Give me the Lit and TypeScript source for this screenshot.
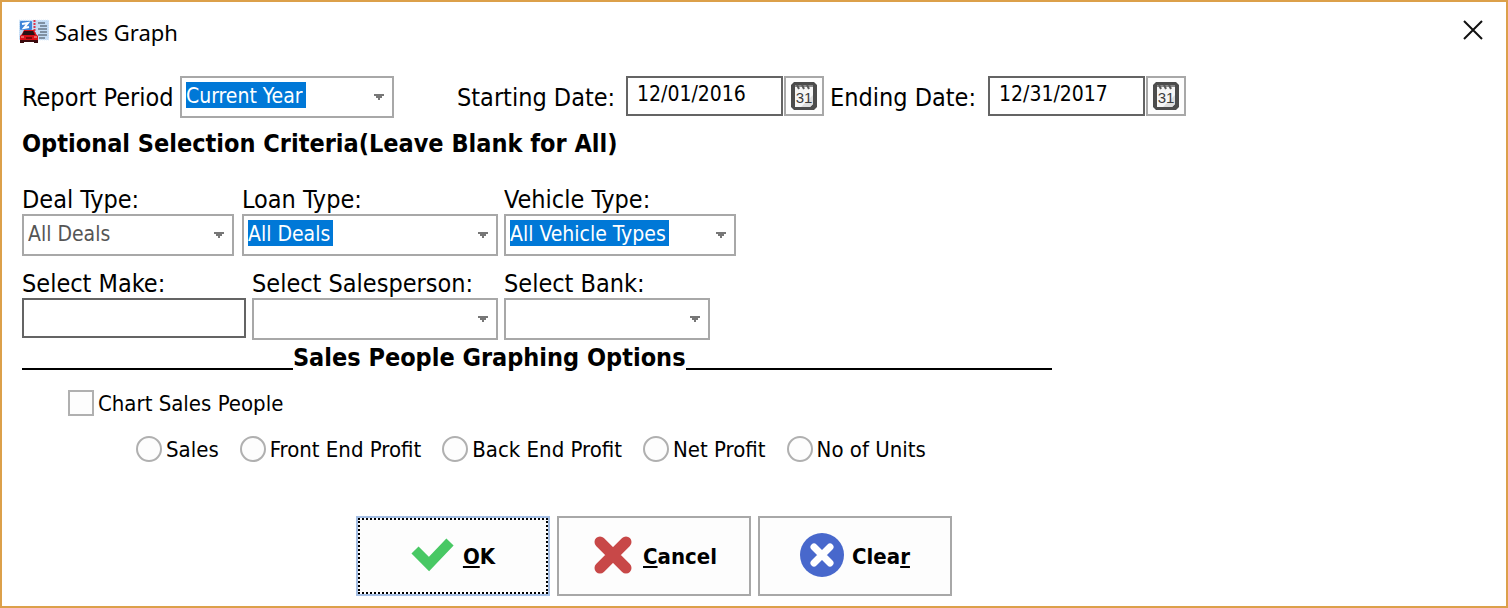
import { LitElement, html, css, svg } from "lit";
import { customElement, property } from "lit/decorators.js";
import { classMap } from "lit/directives/class-map.js";

const calendarIcon = html`<svg width="26" height="28" viewBox="0 0 26 28" aria-hidden="true">
  <path d="M3 0h20l3 3v22l-3 3H3l-3-3V3z" fill="#4c4c4c" />
  <path d="M4 3h18v19l-3 3H4z" fill="#f6f6f6" />
  <path d="M22 13v9l-3 3H10z" fill="#dedede" />
  <path d="M4 3h18v2H4z" fill="#8a8a8a" />
  <path d="M6 3l2 4M11 3l2 4M16 3l2 4" stroke="#5a5a5a" stroke-width="2" fill="none" />
  <text x="13" y="21" text-anchor="middle" font-family="Liberation Sans, sans-serif" font-size="15" fill="#3c3c3c">31</text>
</svg>`;

const appIcon = html`<svg width="30" height="26" viewBox="0 0 30 26" aria-hidden="true">
  <rect x="0" y="1" width="30" height="20" fill="#c3dcf5" />
  <path d="M0 1h30v20H0z" fill="none" stroke="#e2effb" stroke-dasharray="1 1" />
  <rect x="1" y="2" width="12" height="9" rx="1" fill="#3f85d8" />
  <path d="M3 5l6-1-4 5 5-1" stroke="#fff" stroke-width="2" fill="none" />
  <path d="M15.500 1v20" stroke="#e0344a" stroke-width="2" stroke-dasharray="2 1" />
  <path d="M19 4h7M21 7h7M19 10h9M21 13h7M19 16h9M20 19h6" stroke="#3d4650" stroke-width="1" />
  <path d="M5 11h10l2 4 2 2v5H1v-5l2-2z" fill="#d80f18" />
  <path d="M5 12h9l2 4H3z" fill="#2a1216" />
  <path d="M7 18h6v2H7z" fill="#7c070d" />
  <path d="M2 18h3M15 18h3" stroke="#ffb0a8" stroke-width="1" />
  <path d="M1 21h18v3h-4v-1H5v1H1z" fill="#3a0a0d" />
</svg>`;

const okIcon = svg`<path d="M4 17L18 31L39 9" fill="none" stroke="#48c864" stroke-width="10" stroke-linejoin="miter" />`;
const cancelIcon = svg`<path d="M9 9l26 26M35 9L9 35" fill="none" stroke="#c84848" stroke-width="11" stroke-linecap="round" />`;
const clearIcon = svg`<circle cx="22" cy="22" r="22" fill="#4868cc" /><path d="M14 14l16 16M30 14L14 30" fill="none" stroke="#fff" stroke-width="7" stroke-linecap="round" />`;

@customElement("combo-field")
class ComboField extends LitElement {
  @property() label = "";
  @property() layout = "stacked";
  @property({ type: Boolean }) highlighted = false;
  @property({ attribute: false }) options: string[] = [];

  static styles = css`
    :host { display: block; }
    .field { display: flex; flex-direction: column; }
    .inline { flex-direction: row; align-items: center; }
    .label { padding-top: 2px; line-height: 28px; white-space: nowrap; }
    .inline .label { width: 158px; }
    .box {
      display: flex; align-items: flex-start; justify-content: space-between;
      box-sizing: border-box; flex: 1; height: 42px;
      padding: 4px 8px 4px 4px; border: 2px solid #a8a8a8; background: #fff;
    }
    .stacked .box { flex: none; }
    .select {
      appearance: none; field-sizing: content; box-sizing: border-box;
      height: 26px; min-width: 100px; margin: 0; padding: 2px 3px 0 0; border: 0; border-radius: 0; outline: 0;
      background: transparent; color: #555;
      font: 21px/24px "DejaVu Sans Condensed", Tahoma, sans-serif;
    }
    .highlighted .select { background: #0078d7; color: #fff; min-width: 0; }
    .arrow { align-self: center; flex: none; }
  `;

  render() {
    return html`<div class=${classMap({ field: true, inline: this.layout === "inline", stacked: this.layout !== "inline", highlighted: this.highlighted })}>
      <label class="label" for="select">${this.label}</label>
      <div class="box">
        <select class="select" id="select">${this.options.map((o) => html`<option>${o}</option>`)}</select>
        <svg class="arrow" width="10" height="6" viewBox="0 0 10 6" aria-hidden="true"><path d="M0 0h10v2H8v2H6v2H4V4H2V2H0z" fill="#777" /></svg>
      </div>
    </div>`;
  }
}

@customElement("date-field")
class DateField extends LitElement {
  @property() label = "";
  @property() value = "";

  static styles = css`
    :host { display: flex; align-items: flex-start; }
    .label { flex: 1; padding-top: 2px; line-height: 40px; white-space: nowrap; }
    .input {
      box-sizing: border-box; width: 157px; height: 40px; margin: 0; padding: 0 9px 4px;
      border: 2px solid #646464; border-radius: 0; background: #fff; color: #000; outline: 0;
      font: 21px "DejaVu Sans Condensed", Tahoma, sans-serif;
    }
    .pick {
      display: grid; place-items: center; box-sizing: border-box; width: 40px; height: 40px;
      margin: 0 0 0 1px; padding: 0; border: 2px solid #a8a8a8; background: #fdfdfd;
    }
  `;

  render() {
    return html`<label class="label" for="date">${this.label}</label>
      <input class="input" id="date" type="text" .value=${this.value} />
      <button class="pick" type="button" aria-label="Pick date">${calendarIcon}</button>`;
  }
}

@customElement("app-root")
class AppRoot extends LitElement {
  static styles = css`
    :host { display: block; color: #000; font: 25px "DejaVu Sans Condensed", Tahoma, sans-serif; }
    .dialog { box-sizing: border-box; min-height: 100vh; border: 2px solid #dca04a; background: #fff; }
    .titlebar { display: flex; align-items: center; height: 60px; padding: 0 23px 0 17px; }
    .title { flex: 1; margin: 0 0 0 6px; font: 22px/30px "Noto Sans", "Segoe UI", sans-serif; }
    .close { display: grid; width: 20px; height: 20px; margin: 0 0 4px; padding: 0; border: 0; background: none; }
    .form { padding: 14px 20px 10px; }
    .row { display: flex; align-items: flex-start; }
    .period { width: 372px; margin-right: 63px; }
    .start { width: 367px; margin-right: 6px; }
    .end { width: 356px; }
    .heading { margin: 0; padding-top: 2px; font-size: 25px; font-weight: bold; line-height: 28px; white-space: nowrap; }
    .criteria { margin: 10px 0 26px; }
    .types { gap: 8px; margin-bottom: 12px; }
    .picks { gap: 6px; }
    .deal { width: 212px; }
    .loan { width: 256px; }
    .vehicle { width: 232px; margin-left: -2px; }
    .make { width: 224px; }
    .person { width: 246px; }
    .bank { width: 206px; }
    .label { display: block; padding-top: 2px; line-height: 28px; white-space: nowrap; }
    .input {
      display: block; box-sizing: border-box; width: 100%; height: 40px; margin: 0; padding: 0 9px 4px;
      border: 2px solid #646464; border-radius: 0; background: #fff; outline: 0;
      font: 21px "DejaVu Sans Condensed", Tahoma, sans-serif;
    }
    .divider { display: flex; align-items: flex-end; max-width: 1030px; margin-top: 2px; }
    .rule { height: 2px; margin-bottom: 2px; background: #000; }
    .before { flex: 272; }
    .after { flex: 368; }
    .choice { display: flex; align-items: center; gap: 4px; font-size: 22px; line-height: 26px; white-space: nowrap; }
    .caption { padding-top: 2px; }
    .mark { appearance: none; box-sizing: border-box; width: 26px; height: 26px; margin: 0; border: 2px solid #b0b0b0; background: #fdfdfd; }
    .round { border-radius: 50%; }
    .mark:checked { background: #555; background-clip: content-box; padding: 5px; }
    .chart { margin: 17px 0 18px; padding-left: 46px; }
    .radios { gap: 21px; margin: 0; padding: 0 0 0 114px; border: 0; }
    .actions { display: flex; gap: 7px; margin-top: 53px; padding-left: 334px; }
    .action {
      display: flex; align-items: center; justify-content: center; gap: 8px;
      box-sizing: border-box; width: 194px; height: 80px; margin: 0; padding: 0;
      border: 2px solid #a8a8a8; background: #fdfdfd; color: #000;
      font: bold 22px "DejaVu Sans Condensed", Tahoma, sans-serif;
    }
    .default { border-color: #a3bde3; outline: 2px dotted #000; outline-offset: -4px; }
    .key { text-decoration: underline; text-decoration-thickness: 2px; text-underline-offset: 2px; text-decoration-skip-ink: none; }
    .glyph { margin-bottom: 3px; }
  `;

  private radios = ["Sales", "Front End Profit", "Back End Profit", "Net Profit", "No of Units"];

  render() {
    return html`<main class="dialog">
      <header class="titlebar">
        ${appIcon}
        <h1 class="title">Sales Graph</h1>
        <button class="close" type="button" aria-label="Close">
          <svg width="20" height="20" viewBox="0 0 20 20" aria-hidden="true"><path d="M1 1l18 18M19 1L1 19" stroke="#111" stroke-width="2" /></svg>
        </button>
      </header>
      <form class="form">
        <div class="row">
          <combo-field class="period" label="Report Period" layout="inline" highlighted .options=${["Current Year"]}></combo-field>
          <date-field class="start" label="Starting Date:" value="12/01/2016"></date-field>
          <date-field class="end" label="Ending Date:" value="12/31/2017"></date-field>
        </div>
        <h2 class="heading criteria">Optional Selection Criteria(Leave Blank for All)</h2>
        <div class="row types">
          <combo-field class="deal" label="Deal Type:" .options=${["All Deals"]}></combo-field>
          <combo-field class="loan" label="Loan Type:" highlighted .options=${["All Deals"]}></combo-field>
          <combo-field class="vehicle" label="Vehicle Type:" highlighted .options=${["All Vehicle Types"]}></combo-field>
        </div>
        <div class="row picks">
          <div class="make">
            <label class="label" for="make">Select Make:</label>
            <input class="input" id="make" type="text" />
          </div>
          <combo-field class="person" label="Select Salesperson:" .options=${[""]}></combo-field>
          <combo-field class="bank" label="Select Bank:" .options=${[""]}></combo-field>
        </div>
        <div class="divider">
          <span class="rule before"></span>
          <h2 class="heading">Sales People Graphing Options</h2>
          <span class="rule after"></span>
        </div>
        <label class="choice chart"><input class="mark" type="checkbox" /><span class="caption">Chart Sales People</span></label>
        <fieldset class="row radios" aria-label="Graph measure">
          ${this.radios.map((r) => html`<label class="choice"><input class="mark round" type="radio" name="measure" /><span class="caption">${r}</span></label>`)}
        </fieldset>
        <div class="actions">
          <button class="action default" type="button"><svg class="glyph" width="44" height="44" viewBox="0 0 44 44" aria-hidden="true">${okIcon}</svg><span><span class="key">O</span>K</span></button>
          <button class="action" type="button"><svg class="glyph" width="44" height="44" viewBox="0 0 44 44" aria-hidden="true">${cancelIcon}</svg><span><span class="key">C</span>ancel</span></button>
          <button class="action" type="button"><svg class="glyph" width="44" height="44" viewBox="0 0 44 44" aria-hidden="true">${clearIcon}</svg><span>Clea<span class="key">r</span></span></button>
        </div>
      </form>
    </main>`;
  }
}
